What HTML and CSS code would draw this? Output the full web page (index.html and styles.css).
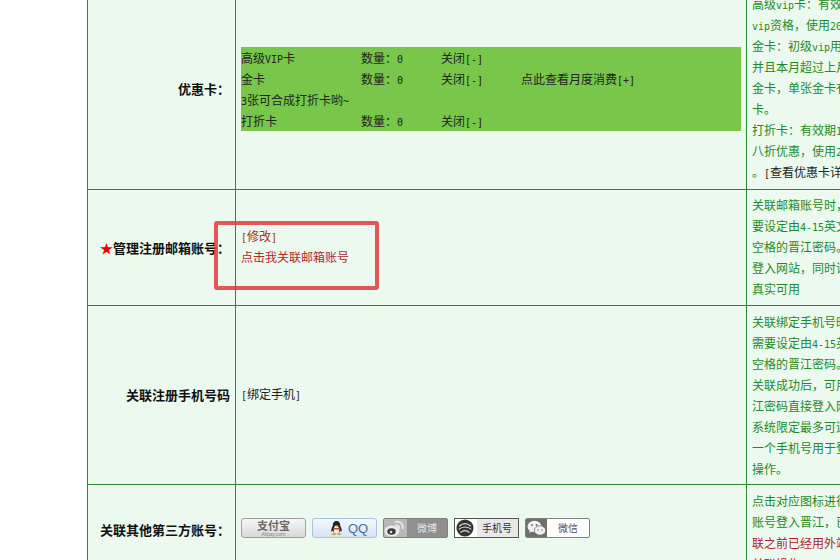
FILE: index.html
```html
<!DOCTYPE html>
<html lang="zh">
<head>
<meta charset="utf-8">
<title>账号管理</title>
<link rel="stylesheet" href="styles.css">
</head>
<body>
<div class="page">
<table class="info">
<colgroup><col class="c1"><col class="c2"><col class="c3"></colgroup>
<tr class="r1">
<th>优惠卡：</th>
<td>
<div class="cards">
<span>高级<span class="m">VIP</span>卡</span><span>数量：<span class="m">0</span></span><span>关闭<span class="m">[-]</span></span><span></span>
<span>金卡</span><span>数量：<span class="m">0</span></span><span>关闭<span class="m">[-]</span></span><span>点此查看月度消费<span class="m">[+]</span></span>
<span class="full"><span class="m">3</span>张可合成打折卡哟<span class="m">~</span></span>
<span>打折卡</span><span>数量：<span class="m">0</span></span><span>关闭<span class="m">[-]</span></span><span></span>
</div>
</td>
<td class="note">高级<span class="m">vip</span>卡：有效<br><span class="m">vip</span>资格，使用<span class="m">20</span><br>金卡：初级<span class="m">vip</span>用<br>并且本月超过上月<br>金卡，单张金卡有<br>卡。<br>打折卡：有效期<span class="m">1</span><br>八折优惠，使用<span class="m">2</span><br>。<span class="black"><span class="m">[</span>查看优惠卡详</span></td>
</tr>
<tr class="r2">
<th><span class="star">★</span>管理注册邮箱账号：</th>
<td class="red"><span class="m">[</span>修改<span class="m">]</span><br>点击我关联邮箱账号</td>
<td class="note">关联邮箱账号时，<br>要设定由<span class="m">4-15</span>英文<br>空格的晋江密码。<br>登入网站，同时请<br>真实可用</td>
</tr>
<tr class="r3">
<th>关联注册手机号码</th>
<td class="plain"><span class="m">[</span>绑定手机<span class="m">]</span></td>
<td class="note">关联绑定手机号时<br>需要设定由<span class="m">4-15</span>英<br>空格的晋江密码。<br>关联成功后，可用<br>江密码直接登入网<br>系统限定最多可连<br>一个手机号用于登<br>操作。</td>
</tr>
<tr class="r4">
<th>关联其他第三方账号：</th>
<td>
<div class="logins">
<span class="btn alipay"><b>支付宝</b><i>Alipay.com</i></span>
<span class="btn qq"><svg class="penguin" viewBox="0 0 14 16"><path fill="#222" d="M7 0C4 0 3 2.400 3 5 2 7 1 9 1.500 11.500L3 10.500 4 12h6l1-1.500 1.500 1C13 9 12 7 11 5c0-2.600-1-5-4-5z"/><path fill="#f4efe4" d="M7 5C5 5 4 7 4 9.500S5.500 13 7 13s3-1 3-3.500S9 5 7 5z"/><path fill="#e8a020" d="M5 4.800h4L7 6.300z"/><path fill="#c9452e" d="M3.500 7.500h7L10 9H4z"/><path fill="#e8a020" d="M2 13h4.500v2H2zM7.500 13H12v2H7.500z"/></svg>QQ</span>
<span class="btn weibo"><span class="tile"><svg viewBox="0 0 23 18"><ellipse cx="8" cy="12" rx="7.500" ry="5.500" fill="#ececec"/><ellipse cx="7.500" cy="12.500" rx="4.200" ry="3.300" fill="#3c3c3c"/><circle cx="7" cy="13" r="1.300" fill="#ddd"/><path d="M11 3c5-1.500 9 2.500 7.500 7M11.500 6.500c2.500-.7 4.300 1.200 3.600 3.500" fill="none" stroke="#ececec" stroke-width="1.600"/></svg></span><b>微博</b></span>
<span class="btn mobile"><svg viewBox="0 0 20 20"><circle cx="10" cy="10" r="9.500" fill="#333"/><path d="M3.500 8c4-3.500 9-3.500 13 0M3 11.500c4-3.500 10-3.500 14 0M5 15c3-2.500 7-2.500 10 0" fill="none" stroke="#ddd" stroke-width="1.300"/></svg><b>手机号</b></span>
<span class="btn wechat"><span class="tile"><svg viewBox="0 0 21 18"><ellipse cx="8.500" cy="7.500" rx="7" ry="5.700" fill="#f2f2f2"/><path d="M4 11l-.8 3 3.400-2z" fill="#f2f2f2"/><ellipse cx="14" cy="11.500" rx="5.700" ry="4.700" fill="#f2f2f2" stroke="#6e6e6e" stroke-width=".8"/><circle cx="6" cy="6" r=".9" fill="#666"/><circle cx="10.500" cy="6" r=".9" fill="#666"/><circle cx="12" cy="11" r=".7" fill="#666"/><circle cx="16" cy="11" r=".7" fill="#666"/></svg></span><b>微信</b></span>
</div>
</td>
<td class="note">点击对应图标进行<br>账号登入晋江，已<br><span class="warn">联之前已经用外站<br>关联操作</span></td>
</tr>
</table>
<div class="mark"></div>
</div>
</body>
</html>
```
FILE: styles.css
```css
html, body {
  margin: 0;
  padding: 0;
  background: #fff;
  overflow: hidden;
}
.page {
  position: relative;
  width: 840px;
  height: 560px;
  overflow: hidden;
  font: 12px/21px "Noto Sans CJK SC", sans-serif;
}
.info {
  margin-left: 87px;
  margin-top: -11px;
  width: 900px;
  table-layout: fixed;
  border-collapse: collapse;
  background: #ecf9ee;
  color: #222;
}
.c1 { width: 148px; }
.c2 { width: 511px; }
.c3 { width: 241px; }
.info th, .info td {
  border: 1px solid #2b8a2f;
  padding: 0 5px;
  vertical-align: middle;
  white-space: nowrap;
  overflow: hidden;
}
.info tr:first-child th, .info tr:first-child td { border-top: 0; }
.info th {
  text-align: right;
  font-size: 13px;
  font-weight: 700;
  color: #111;
}
.m {
  font-family: "DejaVu Sans Mono", monospace;
  font-size: 10px;
  line-height: 1;
}
.r1 { height: 200px; }
.r2 { height: 116px; }
.r3 { height: 179px; }
.r4 { height: 76px; }
.star { color: #e00; }
.cards {
  display: grid;
  grid-template-columns: 120px 80px 80px 1fr;
  background: #78c74a;
}
.full { grid-column: 1 / -1; }
.info .red { color: #b02a2a; padding-bottom: 3px; }
.info .plain { color: #222; padding-bottom: 2px; }
.info .note {
  color: #1e8a28;
  vertical-align: top;
  padding-top: 5px;
}
.info .r1 .note { vertical-align: bottom; padding-top: 0; padding-bottom: 7px; }
.info .r2 .note { padding-top: 4px; }
.black { color: #222; }
.warn { color: #b01a2a; }
.logins {
  display: flex;
  gap: 6px;
  margin-top: -2px;
}
.btn {
  box-sizing: border-box;
  width: 65px;
  height: 20px;
  display: flex;
  align-items: center;
  justify-content: center;
  flex: none;
  border: 1px solid #8f8f8f;
  border-radius: 2px;
  overflow: hidden;
  line-height: 1;
}
.btn b { font-weight: 400; font-size: 10px; }
.alipay {
  flex-direction: column;
  border-color: #a0a0a0;
  border-radius: 3px;
  background: linear-gradient(#f6f6f6, #d8d8d8);
}
.alipay b { font-size: 11px; font-weight: 700; line-height: 11px; color: #6a6a6a; }
.alipay i { font: 5px/6px "Liberation Sans", sans-serif; color: #888; }
.qq {
  justify-content: flex-start;
  gap: 5px;
  padding-left: 17px;
  border-color: #a9c4e0;
  border-radius: 3px;
  background: linear-gradient(#f4f8fc, #d5e4f5);
  color: #4a6e9a;
  font: 13px "Liberation Sans", sans-serif;
}
.penguin { width: 13px; height: 15px; flex: none; }
.weibo {
  justify-content: flex-start;
  border-color: #808080;
  background: #8f8f8f;
  color: #e4e4e4;
}
.tile {
  width: 21px;
  height: 18px;
  flex: none;
  display: block;
}
.tile svg { display: block; width: 100%; height: 100%; }
.weibo .tile { width: 23px; background: #b8b8b8; }
.weibo b { flex: 1; text-align: center; }
.mobile {
  gap: 8px;
  justify-content: flex-start;
  padding-left: 1px;
  border-color: #555;
  border-radius: 0;
  background: linear-gradient(90deg, #fff 22px, #e8e8e8 22px);
  color: #333;
}
.mobile svg { width: 18px; height: 18px; flex: none; }
.wechat {
  justify-content: flex-start;
  border-color: #808080;
  background: #fff;
  color: #555;
}
.wechat .tile { background: #6e6e6e; }
.wechat b { flex: 1; text-align: center; }
.mark {
  position: absolute;
  left: 214px;
  top: 221px;
  width: 157px;
  height: 61px;
  border: 4px solid rgba(222, 60, 60, 0.85);
  border-radius: 3px;
}
```
